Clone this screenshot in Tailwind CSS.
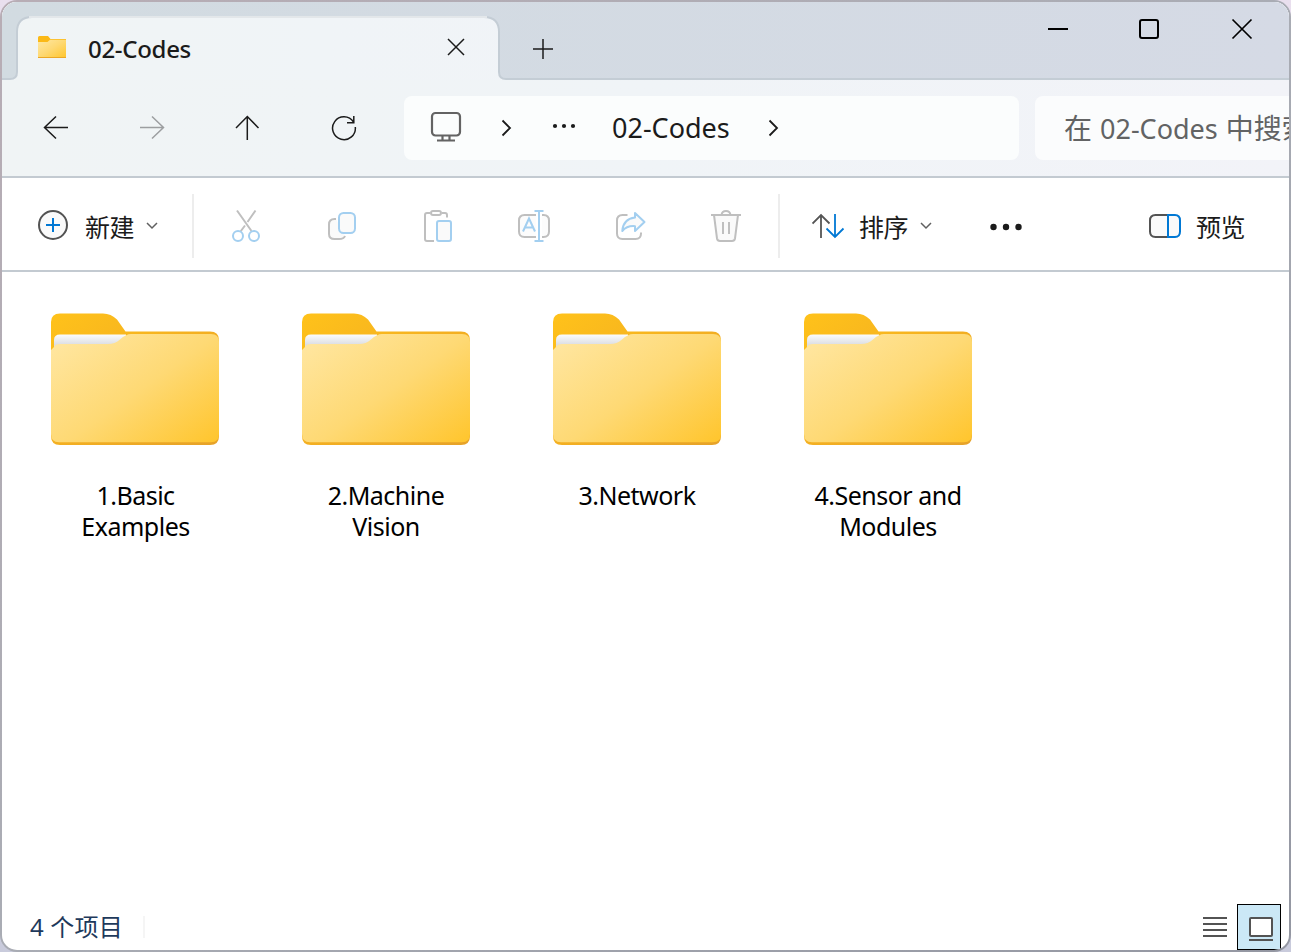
<!DOCTYPE html>
<html lang="zh-CN">
<head>
<meta charset="utf-8">
<title>02-Codes</title>
<script src="https://cdn.jsdelivr.net/npm/@tailwindcss/browser@4"></script>
</head>
<body class="w-[1291px] h-[952px] overflow-hidden bg-gradient-to-b from-[#e9dfee] to-[#c9cbdc] font-['Noto_Sans','Noto_Sans_CJK_SC',sans-serif] text-[#1b1b1b]">
<svg width="0" height="0" class="absolute">
  <defs>
    <linearGradient id="back" x1="0" y1="0" x2="1" y2="1"><stop offset="0" stop-color="#ffc21a"/><stop offset=".5" stop-color="#f4b021"/><stop offset="1" stop-color="#e6a229"/></linearGradient>
    <linearGradient id="front" gradientUnits="userSpaceOnUse" x1="28" y1="12" x2="130" y2="156"><stop offset="0" stop-color="#ffe6a0"/><stop offset=".5" stop-color="#fed974"/><stop offset="1" stop-color="#ffc52c"/></linearGradient>
    <linearGradient id="frontSmall" x1="0" y1="0" x2="1" y2="1"><stop offset="0" stop-color="#ffe8a3"/><stop offset=".5" stop-color="#fed974"/><stop offset="1" stop-color="#ffc62f"/></linearGradient>
    <linearGradient id="paper" x1="0" y1="0" x2="0" y2="1"><stop offset="0" stop-color="#fbfcfd"/><stop offset=".55" stop-color="#dcdee2"/></linearGradient>
    <symbol id="folder" viewBox="0 0 168 133">
      <path d="M0 9Q0 0.500 9 0.500H52Q60 0.500 66 6.500L74.500 18.500H159Q168 18.500 168 27V123Q168 132 159 132H9Q0 132 0 123Z" fill="url(#back)"/>
      <path d="M3 40V27Q3 21.500 9 21.500H75V40Z" fill="url(#paper)"/>
      <path d="M3 34Q4 31 9 31H57Q64 31 69 26.500Q75 21 80 21H160Q168 21 168 29V121Q168 129.300 160 129.300H8Q0 129.300 0 121V37Z" fill="url(#front)"/>
    </symbol>
  </defs>
</svg>
<div class="w-[1291px] h-[952px] p-[2px] rounded-[17px] bg-gradient-to-br from-[#b8adb5] via-[#a9acb4] to-[#9497a2]">
<div class="w-[1287px] h-[948px] rounded-[15px] overflow-hidden bg-white flex flex-col">

  <header class="relative h-[78px] shrink-0 bg-[#f1f4f7]">
    <svg class="absolute inset-0" width="1287" height="78" viewBox="2 2 1287 78" fill="none">
      <defs>
        <linearGradient id="strip"><stop offset="0" stop-color="#d2dbe1"/><stop offset="1" stop-color="#d5dae5"/></linearGradient>
        <linearGradient id="page"><stop offset="0" stop-color="#f0f4f5"/><stop offset=".25" stop-color="#f0f4f7"/><stop offset="1" stop-color="#f2f3f8"/></linearGradient>
      </defs>
      <path d="M2 2H1289V80H2Z" fill="url(#page)"/>
      <path d="M0 79H10Q17 79 17 72V32Q17 17 32 17H484Q499 17 499 32V72Q499 79 506 79H1291V0H0Z" fill="url(#strip)" stroke="#c4cdd5" stroke-width="2"/>
      <path d="M29 17H487" stroke="#e3e7ea" stroke-width="2"/>
    </svg>
    <div class="relative flex h-full">
      <div class="ml-4 w-[481px] flex items-center pl-5 pr-[34px] pt-4 pb-0.5">
        <svg width="28" height="22" viewBox="38 36 28 22" class="shrink-0 -mt-[2px]"><path d="M38 37.500Q38 36 39.500 36H48L50.500 39H66V57Q66 58 65 58H39Q38 58 38 57Z" fill="#fbb917"/><path d="M38 42H47.500L50 39.800H66V57H38Z" fill="url(#frontSmall)"/><path d="M38 57.500H66" stroke="#eba725"/></svg>
        <span class="mt-0.5 ml-[22px] text-[24px] font-medium leading-8 whitespace-nowrap tracking-[-0.3px]">02-Codes</span>
        <svg class="ml-auto -mt-0.5" width="18" height="18" viewBox="0 0 18 18" stroke="#1b1b1b" stroke-width="1.500"><path d="M1 1L17 17M17 1L1 17"/></svg>
      </div>
      <svg class="ml-[34px] mt-[37px]" width="20" height="20" viewBox="0 0 20 20" stroke="#1b1b1b" stroke-width="1.500"><path d="M0 10H20M10 0V20"/></svg>
      <div class="ml-auto mr-[35px] mt-4 flex h-[22px] items-center">
        <svg width="206" height="22" viewBox="1048 18 206 22" fill="none" stroke="#000" stroke-width="2"><path d="M1048 29H1068"/><rect x="1140" y="20" width="18" height="18" rx="2"/><path d="M1232.500 19.500L1251.500 38.500M1251.500 19.500L1232.500 38.500" stroke-width="1.700"/></svg>
      </div>
    </div>
  </header>

  <nav class="h-[98px] shrink-0 border-b-2 border-[#c3cad1] bg-gradient-to-r from-[#f0f4f5] via-[#f0f4f7] to-[#f2f3f8] flex items-center pl-[6px]">
    <div class="w-24 shrink-0 flex justify-center"><svg width="26" height="26" viewBox="43 115 26 26" fill="none" stroke="#1b1b1b" stroke-width="1.500"><path d="M68 127.500H45M56 116.500L44.500 127.500L56 138.500"/></svg></div>
    <div class="w-24 shrink-0 flex justify-center"><svg width="26" height="26" viewBox="139 115 26 26" fill="none" stroke="#9c9ea0" stroke-width="1.500"><path d="M140 127.500H163M152 116.500L163.500 127.500L152 138.500"/></svg></div>
    <div class="w-24 shrink-0 flex justify-center"><svg width="26" height="26" viewBox="235 115 26 26" fill="none" stroke="#1b1b1b" stroke-width="1.500"><path d="M247.300 140V117M236 128L247.300 116.500L258.500 128"/></svg></div>
    <div class="w-24 shrink-0 flex justify-center"><svg width="26" height="26" viewBox="331 115 26 26" fill="none" stroke="#1b1b1b" stroke-width="1.500"><path d="M355.300 127A11.400 11.400 0 1 1 353.500 122M353.800 116V122.800H347"/></svg></div>
    <div class="ml-3 w-[615px] h-16 shrink-0 rounded-lg bg-[#fbfdfd] flex items-center pl-[26px]">
      <svg class="-mt-0.5" width="32" height="32" viewBox="430 111 32 32" fill="none" stroke="#636363" stroke-width="2.200"><rect x="432" y="113" width="28" height="22.500" rx="3.500"/><path d="M442.500 136V140M449.500 136V140M437 140.500H455"/></svg>
      <svg class="ml-[39px]" width="12" height="18" viewBox="501 119 12 18" fill="none" stroke="#1b1b1b" stroke-width="1.800"><path d="M502.500 120.500L510 128L502.500 135.500"/></svg>
      <svg class="ml-[39px] -mt-1" width="24" height="6" viewBox="552 123 24 6" fill="#1b1b1b"><circle cx="555" cy="126" r="2.100"/><circle cx="564" cy="126" r="2.100"/><circle cx="573" cy="126" r="2.100"/></svg>
      <span class="ml-[36px] w-[118px] text-[27px] leading-8 whitespace-nowrap">02-Codes</span>
      <svg class="ml-[38px]" width="12" height="18" viewBox="501 119 12 18" fill="none" stroke="#1b1b1b" stroke-width="1.800"><path d="M502.500 120.500L510 128L502.500 135.500"/></svg>
    </div>
    <div class="ml-4 w-[400px] h-16 shrink-0 rounded-lg bg-[#fbfcfd] flex items-center pl-[29px] text-[28px] text-[#626364] leading-8 whitespace-nowrap"><span>在<span class="text-[27px] mx-px"> 02-Codes </span>中搜索</span></div>
  </nav>

  <div class="h-[94px] shrink-0 border-b-2 border-[#c3cad1] flex items-center pt-1">
    <div class="w-[190px] shrink-0 flex items-center pl-[35px]">
      <svg class="-mt-0.5" width="32" height="32" viewBox="37 209 32 32" fill="none"><circle cx="53" cy="225" r="14" fill="#fafafa" stroke="#535353" stroke-width="2"/><path d="M46 225H60M53 218V232" stroke="#0078d4" stroke-width="2"/></svg>
      <span class="mt-0.5 ml-4 w-12 text-[25px] leading-8 whitespace-nowrap tracking-[-0.5px]">新建</span>
      <svg class="ml-[13px]" width="12" height="8" viewBox="0 0 12 8" fill="none" stroke="#606060" stroke-width="1.500"><path d="M1 1L6 6L11 1"/></svg>
    </div>
    <div class="w-0.5 h-16 bg-[#ededed]"></div>
    <div class="ml-1 flex h-9">
      <svg class="mx-[30px]" width="36" height="36" viewBox="228 208 36 36" fill="none" stroke="#bfbfbf" stroke-width="2"><path d="M237 210.500L251.500 231M255.500 210.500L247.500 222M245 225.500L240.500 231.500"/><g stroke="#a3cff0"><circle cx="238" cy="236" r="5"/><circle cx="254" cy="236" r="5"/></g></svg>
      <svg class="mx-[30px]" width="36" height="36" viewBox="324 208 36 36" fill="none" stroke="#bfbfbf" stroke-width="2"><path d="M336 219H334.500Q329 219 329 224.500V234Q329 239 334.500 239H339Q344 239 345 236" fill="#fafafa"/><rect x="339" y="213" width="16" height="20" rx="4.500" fill="#fafafa" stroke="#a3cff0"/></svg>
      <svg class="mx-[30px]" width="36" height="36" viewBox="420 208 36 36" fill="none" stroke="#bfbfbf" stroke-width="2"><path d="M434 241H427Q425 241 425 239V215Q425 213 427 213H430M442 213H445Q447 213 447 215V217.500"/><rect x="431" y="211" width="10" height="4" rx="2"/><rect x="437" y="221" width="14" height="20" rx="2" fill="#fafafa" stroke="#a3cff0"/></svg>
      <svg class="mx-[30px]" width="36" height="36" viewBox="516 208 36 36" fill="none" stroke="#bfbfbf" stroke-width="2"><path d="M536 215H524.500Q519 215 519 220.500V231.500Q519 237 524.500 237H536M542 215H543.500Q549 215 549 220.500V231.500Q549 237 543.500 237H542" fill="#fcfcfc"/><g stroke="#a3cff0"><path d="M523 231.500L529 218.500L535 231.500M525 227.500H533M539 211V241M534.500 211H543.500M534.500 241H543.500"/></g></svg>
      <svg class="mx-[30px]" width="36" height="36" viewBox="612 208 36 36" fill="none" stroke="#bfbfbf" stroke-width="2"><path d="M627.500 215H622.500Q617 215 617 220.500V233.500Q617 239 622.500 239H635.500Q641 239 641 233.500V232.500"/><path d="M635 213L644.500 222L635 231V226.200Q627 225.500 622.300 231Q623 219 635 217.500Z" fill="#fafafa" stroke="#a3cff0" stroke-linejoin="round"/></svg>
      <svg class="mx-[30px]" width="36" height="36" viewBox="708 208 36 36" fill="none" stroke="#bfbfbf" stroke-width="2"><path d="M714 215L717 238.500Q717.500 241 720 241H732Q734.500 241 735 238.500L738 215" fill="#fafafa"/><path d="M711 215H741M721.500 215Q722 211 726 211Q730 211 730.500 215M723 222V234M729 222V234"/></svg>
    </div>
    <div class="ml-1 w-0.5 h-16 bg-[#ededed]"></div>
    <svg class="ml-8" width="34" height="28" viewBox="812 212 34 28" fill="none" stroke="#555" stroke-width="1.800"><path d="M821 238V215M812.500 223.500L821 215L829.500 223.500"/><path d="M835 214V237M826.500 228.500L835 237L843.500 228.500" stroke="#0078d4"/></svg>
    <span class="mt-0.5 ml-[13px] w-12 text-[25px] leading-8 whitespace-nowrap tracking-[-0.5px]">排序</span>
    <svg class="ml-[13px]" width="12" height="8" viewBox="0 0 12 8" fill="none" stroke="#606060" stroke-width="1.500"><path d="M1 1L6 6L11 1"/></svg>
    <svg class="ml-[57px] mt-0.5" width="34" height="8" viewBox="989 223 34 8" fill="#1b1b1b"><circle cx="993.500" cy="227" r="3.200"/><circle cx="1006" cy="227" r="3.200"/><circle cx="1018.500" cy="227" r="3.200"/></svg>
    <svg class="ml-auto" width="34" height="26" viewBox="1148 213 34 26" fill="#fafafa" stroke-width="2"><path d="M1168 215H1155.500Q1150 215 1150 220.500V231.500Q1150 237 1155.500 237H1168" stroke="#535353"/><path d="M1168 215H1175Q1180 215 1180 220.500V231.500Q1180 237 1175 237H1168Z" stroke="#0078d4"/></svg>
    <span class="mt-0.5 ml-[14px] mr-[45px] w-12 text-[25px] leading-8 whitespace-nowrap tracking-[-0.5px]">预览</span>
  </div>

  <main class="grow flex gap-[31px] pt-[41px] pl-[23px] text-black text-[25px] leading-[31px] tracking-[-0.5px] text-center">
    <div class="w-[220px] flex flex-col items-center"><svg width="168" height="133"><use href="#folder"/></svg><div class="mt-[34px] pl-px">1.Basic<br>Examples</div></div>
    <div class="w-[220px] flex flex-col items-center"><svg width="168" height="133"><use href="#folder"/></svg><div class="mt-[34px]">2.Machine<br>Vision</div></div>
    <div class="w-[220px] flex flex-col items-center"><svg width="168" height="133"><use href="#folder"/></svg><div class="mt-[34px]">3.Network</div></div>
    <div class="w-[220px] flex flex-col items-center"><svg width="168" height="133"><use href="#folder"/></svg><div class="mt-[34px]">4.Sensor and<br>Modules</div></div>
  </main>

  <footer class="h-[46px] shrink-0 flex items-center pl-7 pr-2 text-[#1e395b]">
    <span class="w-[94px] text-[24px] leading-8 whitespace-nowrap tracking-[0.2px]">4 个项目</span>
    <div class="ml-[19px] w-0.5 h-[22px] bg-[#f5f5f5]"></div>
    <svg class="ml-auto" width="24" height="20" viewBox="0 0 24 20" stroke="#535353" stroke-width="2"><path d="M0 1H24M0 7H24M0 13H24M0 19H24"/></svg>
    <div class="ml-[10px] w-11 h-[46px] border border-black bg-[#cbe8f6] flex items-center justify-center"><svg class="mt-1 ml-1" width="24" height="24" viewBox="0 0 24 24" stroke="#535353" stroke-width="2" fill="#fff"><rect x="1" y="1" width="22" height="18" rx="1"/><path d="M0 23H24"/></svg></div>
  </footer>
</div>
</div>
</body>
</html>
